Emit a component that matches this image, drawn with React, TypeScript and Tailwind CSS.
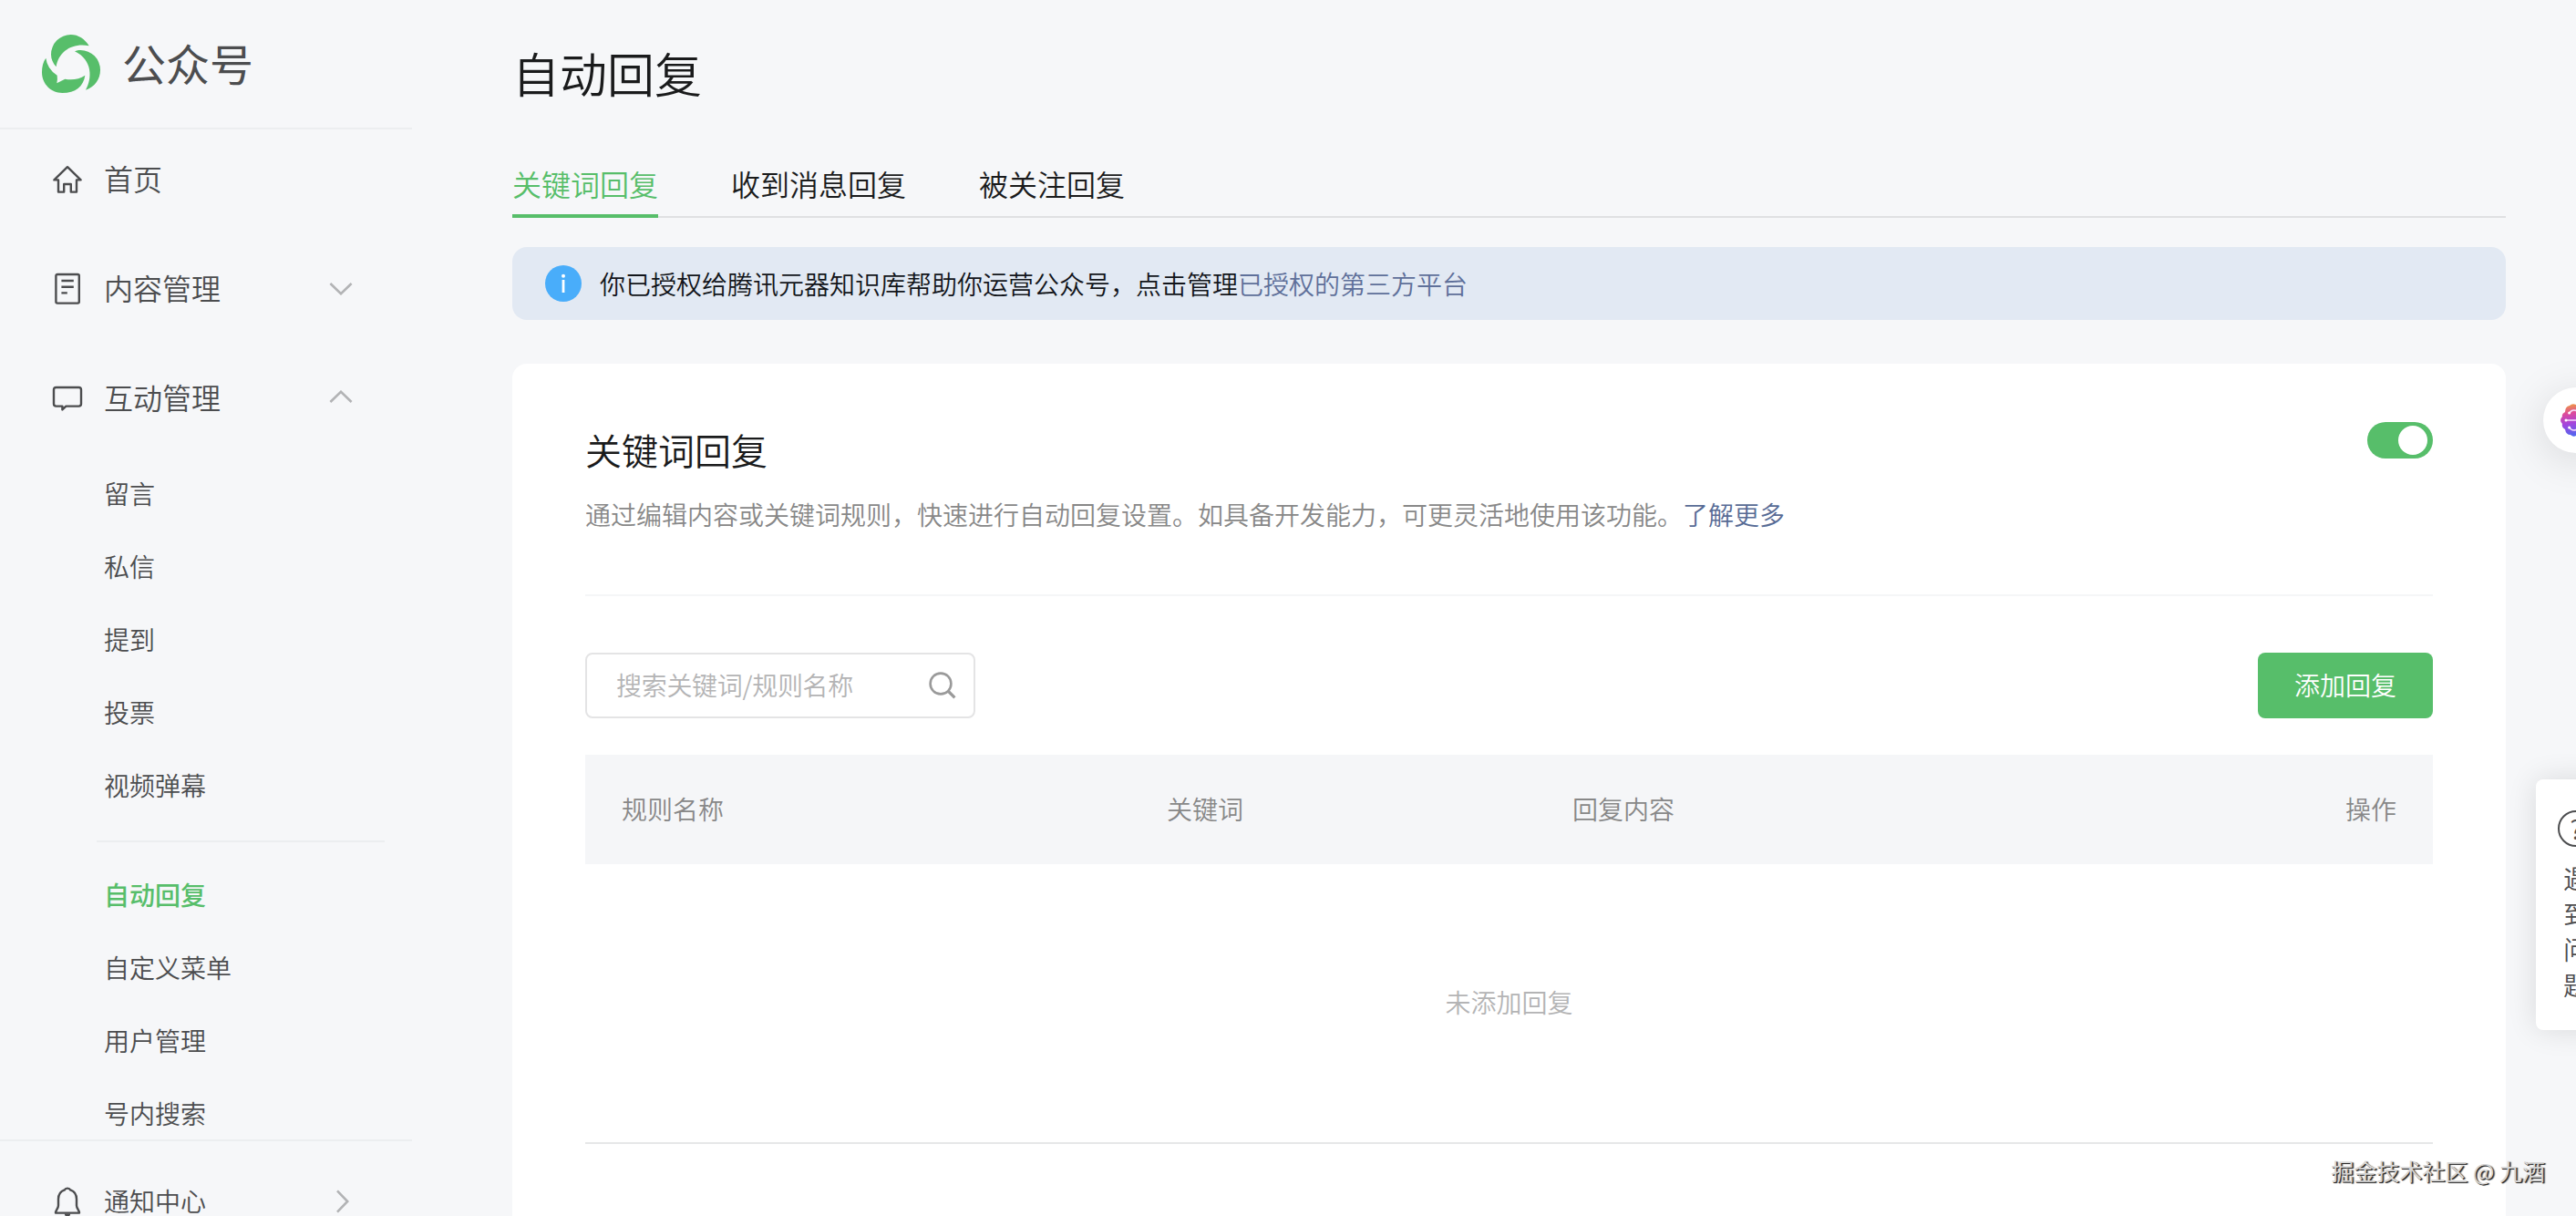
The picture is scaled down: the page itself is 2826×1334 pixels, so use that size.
import { useState } from "react";

const contentMenu = ["留言", "私信", "提到", "投票", "视频弹幕"];
const toolMenu = ["自动回复", "自定义菜单", "用户管理", "号内搜索"];
const tabs = ["关键词回复", "收到消息回复", "被关注回复"];

function Logo() {
    return (
        <svg viewBox="48 54 192 192" className="w-16 h-16" fill="#57be6a">
            <path d="M95 160C84 147 78 134 78 119A65 65 0 0 1 143 54C168 54 189 68 203 91C150 80 103 108 95 160Z" />
            <path d="M156 109C162 106 168 105 175 105A65 65 0 0 1 240 170C240 200 222 226 192 236C213 200 216 138 156 109Z" />
            <path d="M61 131C52 143 48 160 48 178C48 217 78 246 115 246C158 246 185 224 190 188C172 200 149 204 124 200L97 214Q100 200 98 188Q65 166 61 131Z" />
        </svg>
    );
}

function HomeIcon() {
    return (
        <svg viewBox="0 0 36 36" className="w-9 h-9" fill="none" stroke="#4c4d4f" strokeWidth="2.4" strokeLinejoin="round">
            <path d="M18 4.2L32.6 18.4H28V31.6H21.8V23H14.2V31.6H8V18.4H3.4Z" />
        </svg>
    );
}

function DocIcon() {
    return (
        <svg viewBox="0 0 36 36" className="w-9 h-9" fill="none" stroke="#4c4d4f" strokeWidth="2.4">
            <rect x="5.4" y="2" width="25.4" height="31.6" rx="1.6" />
            <path d="M11.4 9H24.8M11.4 15.8H24.8M11.4 22.4H17.8" />
        </svg>
    );
}

function ChatIcon() {
    return (
        <svg viewBox="0 0 36 36" className="w-9 h-9" fill="none" stroke="#4c4d4f" strokeWidth="2.4" strokeLinejoin="round">
            <path d="M5.6 6H30.4Q33 6 33 8.6V24Q33 26.6 30.4 26.6H16.4L12.4 30.4V26.6H5.6Q3 26.6 3 24V8.6Q3 6 5.6 6Z" />
        </svg>
    );
}

function BellIcon() {
    return (
        <svg viewBox="0 0 36 36" className="w-9 h-9" fill="none" stroke="#4c4d4f" strokeWidth="2.4" strokeLinejoin="round">
            <path d="M18 3.6Q20.4 3.6 21.2 5.4C26 7 28 11 28 15.6V22.6C28 25.6 31 27.6 31 30.6H5C5 27.6 8 25.6 8 22.6V15.6C8 11 10 7 14.8 5.4Q15.6 3.6 18 3.6Z" />
            <path d="M14.8 31.4A3.2 3.2 0 0 0 21.2 31.4Z" fill="#4c4d4f" stroke="none" />
        </svg>
    );
}

function Chevron({ className }: { className?: string }) {
    return (
        <svg viewBox="0 0 26 14" className={`w-[26px] h-[14px] ${className ?? ""}`} fill="none" stroke="#b2b3b5" strokeWidth="2.6">
            <path d="M1.4 1L13 12.2L24.6 1" />
        </svg>
    );
}

function SearchIcon() {
    return (
        <svg viewBox="0 0 30 30" className="w-[30px] h-[30px]" fill="none" stroke="#9a9a9a" strokeWidth="2.6">
            <circle cx="13" cy="13" r="11.4" />
            <path d="M21 21L28.4 28.4" strokeWidth="3.2" />
        </svg>
    );
}

function BrainIcon() {
    return (
        <svg viewBox="0 0 36 36" className="w-9 h-9" fill="none">
            <defs>
                <linearGradient id="brain" x1="8" y1="0" x2="14" y2="36" gradientUnits="userSpaceOnUse">
                    <stop offset="0" stopColor="#f0a03c" />
                    <stop offset="0.3" stopColor="#dd4a9c" />
                    <stop offset="0.6" stopColor="#a545dc" />
                    <stop offset="1" stopColor="#4d68f0" />
                </linearGradient>
            </defs>
            <path d="M18 1Q14-1 11 2Q6 3 6 9Q2 11 3 14Q-1 18 3 22Q2 26 6 28Q7 34 12 34Q15 37 18 35Q21 37 24 34Q29 34 30 28Q34 26 33 22Q37 18 33 14Q34 11 30 9Q30 3 25 2Q22-1 18 1Z" fill="url(#brain)" />
            <path d="M8 18H28M11 10Q13 6 18 7.4Q23 6 25 10M11 26Q13 30 18 28.6Q23 30 25 26" stroke="#f7dcff" strokeWidth="1.6" />
            <circle cx="7" cy="18" r="1.5" fill="#fff" />
            <circle cx="10.6" cy="10" r="1.5" fill="#fff" />
            <circle cx="10.6" cy="26" r="1.5" fill="#fff" />
        </svg>
    );
}

function Sidebar() {
    return (
        <aside className="flex flex-col w-[452px] h-full shrink-0 text-[#4c4d4f]">
            <div className="flex items-center h-[142px] shrink-0 pl-[46px] border-b-2 border-[#eceef0]">
                <Logo />
                <span className="pl-6 pb-1 text-5xl leading-none font-normal">公众号</span>
            </div>
            <nav className="flex flex-col grow overflow-hidden text-[32px]">
                <div className="flex items-center h-[115px] shrink-0 pl-14 pb-[5px]">
                    <HomeIcon />
                    <span className="pl-[22px] pb-[5px] leading-none">首页</span>
                </div>
                <div className="flex items-center h-[120px] shrink-0 pl-14 pr-[65px]">
                    <DocIcon />
                    <span className="pl-[22px] pb-[5px] leading-none grow">内容管理</span>
                    <Chevron />
                </div>
                <div className="flex items-center h-[120px] shrink-0 pl-14 pr-[65px]">
                    <ChatIcon />
                    <span className="pl-[22px] pb-[5px] leading-none grow">互动管理</span>
                    <Chevron className="rotate-180 mb-1" />
                </div>
                <div className="pt-1 pl-[114px] text-[28px]">
                    {contentMenu.map((item) => (
                        <div key={item} className="leading-[80px]">{item}</div>
                    ))}
                </div>
                <div className="h-0.5 shrink-0 mt-[21px] mb-[17px] ml-[106px] mr-[30px] bg-[#eceef0]" />
                <div className="pl-[114px] text-[28px]">
                    {toolMenu.map((item) => (
                        <div key={item} className={item === "自动回复" ? "leading-[80px] text-[#57be6a] font-medium" : "leading-[80px]"}>{item}</div>
                    ))}
                </div>
            </nav>
            <div className="flex items-center h-[84px] shrink-0 border-t-2 border-[#eceef0] pl-14 pr-[63px] pt-[50px]">
                <BellIcon />
                <span className="pl-[22px] pb-[3px] text-[28px] leading-none grow">通知中心</span>
                <Chevron className="-rotate-90" />
            </div>
        </aside>
    );
}

function Switch() {
    const [on, setOn] = useState(true);
    return (
        <button onClick={() => setOn(!on)} className={`flex w-[72px] h-10 rounded-full px-1.5 py-1 ${on ? "justify-end bg-[#57be6a]" : "justify-start bg-gray-300"}`}>
            <span className="w-8 h-8 rounded-full bg-white" />
        </button>
    );
}

function ReplyCard() {
    return (
        <section className="flex flex-col grow mt-12 px-20 rounded-t-2xl bg-white">
            <div className="flex justify-between pt-16">
                <div>
                    <h2 className="pt-1.5 text-[40px] leading-[48px] text-[#1a1b1c]">关键词回复</h2>
                    <p className="pt-[27px] text-[28px] leading-10 text-[#888]">
                        通过编辑内容或关键词规则，快速进行自动回复设置。如具备开发能力，可更灵活地使用该功能。<a className="text-[#576b95]">了解更多</a>
                    </p>
                </div>
                <Switch />
            </div>
            <div className="h-0.5 mt-[68px] bg-[#f5f6f7]" />
            <div className="flex justify-between pt-[62px]">
                <div className="flex items-center justify-between w-[428px] h-[72px] pl-8 pr-[19px] border-2 border-[#e4e4e5] rounded-lg">
                    <span className="pb-[3px] text-[28px] leading-none tracking-[-0.3px] text-[#b4b4b5]">搜索关键词/规则名称</span>
                    <SearchIcon />
                </div>
                <button className="w-48 h-[72px] pb-[3px] rounded-lg bg-[#57be6a] text-white text-[28px] leading-none">添加回复</button>
            </div>
            <div className="flex items-center h-[120px] mt-10 px-10 pb-[3px] bg-[#f5f6f8] text-[28px] leading-none text-[#888]">
                <div className="w-[598px]">规则名称</div>
                <div className="w-[445px]">关键词</div>
                <div className="grow">回复内容</div>
                <div>操作</div>
            </div>
            <div className="flex items-center justify-center h-[307px] pb-[3px] border-b-2 border-[#e6e7e8] text-[28px] leading-none text-[#b4b4b5]">未添加回复</div>
        </section>
    );
}

function App() {
    return (
        <div className="relative flex w-full h-screen overflow-hidden bg-[#f6f7f9] font-['Noto_Sans_CJK_SC',sans-serif] font-[350]">
            <Sidebar />
            <main className="flex flex-col grow pl-[110px] pr-[77px]">
                <h1 className="pt-[50px] text-[52px] leading-[60px] text-[#1a1b1c]">自动回复</h1>
                <div className="flex gap-20 h-[71px] mt-[58px] border-b-2 border-[#dfe0e2] text-[32px] text-[#1a1b1c]">
                    {tabs.map((tab, i) => (
                        <div key={tab} className={i === 0 ? "h-[71px] leading-[67px] border-b-4 border-[#57be6a] text-[#57be6a]" : "leading-[67px]"}>{tab}</div>
                    ))}
                </div>
                <div className="flex items-center h-20 shrink-0 mt-8 pl-9 rounded-2xl bg-[#e2e9f3] text-[28px] leading-none text-[#12151a]">
                    <svg viewBox="0 0 40 40" className="w-10 h-10 mr-5">
                        <circle cx="20" cy="20" r="20" fill="#49adfa" />
                        <circle cx="20" cy="11.8" r="2" fill="#fff" />
                        <path d="M20 16V30" stroke="#fff" strokeWidth="2.8" />
                    </svg>
                    <span>你已授权给腾讯元器知识库帮助你运营公众号，点击管理<a className="text-[#5f709a]">已授权的第三方平台</a></span>
                </div>
                <ReplyCard />
            </main>
            <div className="absolute top-[425px] -right-9 flex items-center justify-center w-[72px] h-[72px] rounded-full bg-white shadow-[0_8px_48px_rgba(0,0,0,0.13)]">
                <BrainIcon />
            </div>
            <div className="absolute top-[855px] -right-11 flex flex-col items-center w-[88px] h-[275px] pt-[34px] rounded-lg bg-white shadow-[0_0_32px_rgba(0,0,0,0.12)] text-[28px] leading-[39px] text-[#4c4d4f]">
                <div className="flex items-center justify-center w-10 h-10 mb-[15px] rounded-full border-2 border-[#4c4d4f] text-[28px] leading-none">?</div>
                <span>遇</span>
                <span>到</span>
                <span>问</span>
                <span>题</span>
            </div>
            <div className="absolute top-[1268px] right-[34px] text-[25px] leading-8 text-[#d6d6d6] font-normal [text-shadow:1px_1px_0_#2a2a2a,2px_1px_1px_#666]">掘金技术社区 @ 九酒</div>
        </div>
    );
}

export default App;
